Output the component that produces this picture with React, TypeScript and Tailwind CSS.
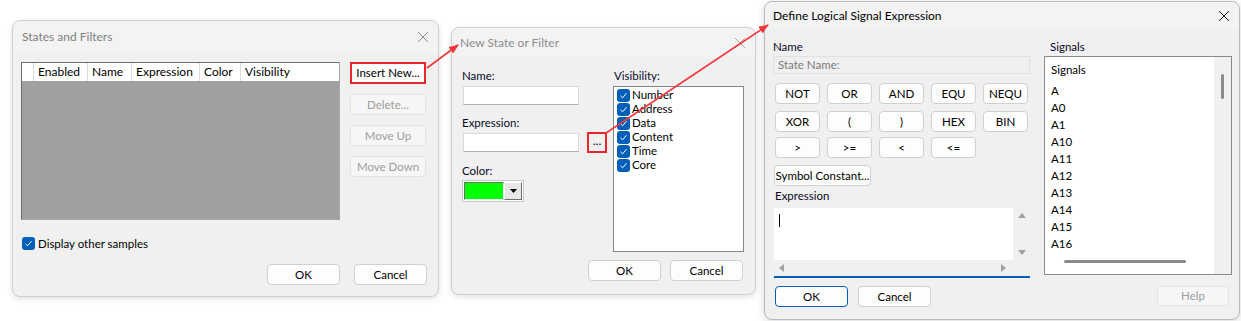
import React from "react";

const font = "font-['Lato',sans-serif]";

const Btn = ({ label, className = "", disabled = false }: { label: string; className?: string; disabled?: boolean }) => (
  <div
    className={`flex items-center justify-center whitespace-nowrap rounded-[4px] border text-[11.5px] ${
      disabled ? "border-[#e3e3e3] bg-[#f6f6f6] text-[#9d9d9d]" : "border-[#d0d0d0] bg-[#fdfdfd] text-black"
    } ${className}`}
  >
    {label}
  </div>
);

const Check = () => (
  <div className="flex h-[13px] w-[13px] shrink-0 items-center justify-center rounded-[3px] bg-[#005fb8]">
    <svg width="9" height="9" viewBox="0 0 9 9">
      <path d="M1.5 4.8 L3.6 6.8 L7.5 2.2" fill="none" stroke="white" strokeWidth="1" />
    </svg>
  </div>
);

const Close = ({ color }: { color: string }) => (
  <svg width="12" height="12" viewBox="0 0 12 12">
    <path d="M1 1 L11 11 M11 1 L1 11" stroke={color} strokeWidth="1" />
  </svg>
);

const StatesAndFilters = () => (
  <div className="ml-[12px] mt-[20px] flex h-[277px] w-[427px] flex-col rounded-[8px] border border-[#cfcfcf] bg-[#f0f0f0] shadow-[0_2px_6px_rgba(0,0,0,0.12)]">
    <div className="flex h-[31px] items-center justify-between rounded-t-[8px] bg-[#f3f3f3] pl-[9px] pr-[9px] pt-[1px]">
      <span className="text-[12px] text-[#808080]">States and Filters</span>
      <Close color="#8a8a8a" />
    </div>
    <div className="flex gap-[10px] pl-[8px] pt-[10px]">
      <div className="flex h-[158px] w-[319px] flex-col border border-[#a8a8a8] border-l-[#6d6d6d] border-t-[#6d6d6d] bg-[#a0a0a0]">
        <div className="flex h-[18px] bg-white text-[12px] text-black">
          <div className="w-[12px] border-r border-[#dcdcdc]" />
          <div className="w-[54px] border-r border-[#dcdcdc] pl-[4px] leading-[18px]">Enabled</div>
          <div className="w-[44px] border-r border-[#dcdcdc] pl-[4px] leading-[18px]">Name</div>
          <div className="w-[68px] border-r border-[#dcdcdc] pl-[4px] leading-[18px]">Expression</div>
          <div className="w-[41px] border-r border-[#dcdcdc] pl-[4px] leading-[18px]">Color</div>
          <div className="flex-1 pl-[4px] leading-[18px]">Visibility</div>
        </div>
      </div>
      <div className="flex w-[76px] flex-col gap-[10px]">
        <div className="h-[22px] border-2 border-[#e8262c] bg-[#fdfdfd]">
          <div className="flex h-full items-center justify-center text-[11.5px] text-black">Insert New...</div>
        </div>
        <Btn label="Delete..." disabled className="h-[21px]" />
        <Btn label="Move Up" disabled className="h-[21px]" />
        <Btn label="Move Down" disabled className="h-[21px]" />
      </div>
    </div>
    <div className="mt-[15px] flex items-center gap-[3px] pl-[9px] text-[11.5px] text-black">
      <Check />
      <span>Display other samples</span>
    </div>
    <div className="mt-[12px] flex justify-end gap-[14px] pr-[11px]">
      <Btn label="OK" className="h-[21px] w-[73px]" />
      <Btn label="Cancel" className="h-[21px] w-[73px]" />
    </div>
  </div>
);

const NewState = () => (
  <div className="ml-[12px] mt-[27px] flex h-[268px] w-[305px] flex-col rounded-[8px] border border-[#cfcfcf] bg-[#f0f0f0] shadow-[0_2px_6px_rgba(0,0,0,0.12)]">
    <div className="flex h-[29px] items-center justify-between rounded-t-[8px] bg-[#f3f3f3] pl-[8px] pr-[9px]">
      <span className="text-[12px] text-[#8c8c8c]">New State or Filter</span>
      <Close color="#a8a8a8" />
    </div>
    <div className="flex pl-[10px] pt-[11px]">
      <div className="flex w-[151px] flex-col text-[11.5px] text-[#0a0a28]">
        <span className="h-[16px] leading-[16px]">Name:</span>
        <div className="ml-[1px] mt-[2px] h-[19px] w-[116px] border border-[#dadada] border-b-[#b0b0b0] bg-white" />
        <span className="mt-[10px] h-[16px] leading-[16px]">Expression:</span>
        <div className="mt-[1px] flex items-center">
          <div className="ml-[1px] h-[19px] w-[116px] border border-[#dadada] border-b-[#b0b0b0] bg-white" />
          <div className="ml-[8px] flex h-[21px] w-[20px] items-center justify-center border-2 border-[#e8262c] pb-[3px] text-[12px] text-black">
            ...
          </div>
        </div>
        <span className="mt-[10px] h-[16px] leading-[16px]">Color:</span>
        <div className="mt-[1px] flex h-[22px] w-[62px] items-center border border-[#c8c8c8] bg-white p-[1px]">
          <div className="h-full w-[40px] border border-[#6d6d6d] border-b-[#f0f0f0] border-r-[#f0f0f0] bg-[#00ff00]" />
          <div className="flex h-full w-[18px] items-center justify-center border border-[#6d6d6d] border-l-[#ffffff] border-t-[#ffffff] bg-[#e8e8e8]">
            <svg width="7" height="4" viewBox="0 0 7 4">
              <path d="M0 0 L7 0 L3.5 4 Z" fill="black" />
            </svg>
          </div>
        </div>
      </div>
      <div className="flex flex-col text-[11.5px] text-[#0a0a28]">
        <span className="h-[16px] pl-[1px] leading-[16px]">Visibility:</span>
        <div className="mt-[2px] h-[166px] w-[131px] border border-[#828790] bg-white pl-[3px] pt-[1px]">
          {["Number", "Address", "Data", "Content", "Time", "Core"].map((v) => (
            <div key={v} className="flex h-[14px] items-center gap-[2px] text-black">
              <Check />
              <span>{v}</span>
            </div>
          ))}
        </div>
      </div>
    </div>
    <div className="mt-[8px] flex justify-end gap-[9px] pr-[12px]">
      <Btn label="OK" className="h-[21px] w-[73px]" />
      <Btn label="Cancel" className="h-[21px] w-[73px]" />
    </div>
  </div>
);

const Signals = () => {
  const items = ["A", "A0", "A1", "A10", "A11", "A12", "A13", "A14", "A15", "A16"];
  return (
    <div className="mt-[1px] h-[219px] w-[188px] border border-[#8a8a8a] bg-white">
      <div className="flex h-full">
        <div className="flex-1 pl-[6px] pt-[5px] text-[11.5px] text-black">
          <div className="h-[20px] leading-[16px]">Signals</div>
          {items.map((s) => (
            <div key={s} className="h-[17px] leading-[17px]">
              {s}
            </div>
          ))}
          <div className="ml-[13px] mt-[8px] h-[3px] w-[122px] rounded-full bg-[#8a8a8a]" />
        </div>
        <div className="flex w-[17px] flex-col items-center bg-[#f0f0f0] pt-[17px]">
          <div className="h-[25px] w-[3px] rounded-full bg-[#8a8a8a]" />
        </div>
      </div>
    </div>
  );
};

const DefineExpression = () => {
  const rows = [
    ["NOT", "OR", "AND", "EQU", "NEQU"],
    ["XOR", "(", ")", "HEX", "BIN"],
    [">", ">=", "<", "<="],
  ];
  return (
    <div className="ml-[8px] mt-[1px] flex h-[319px] w-[476px] flex-col rounded-[8px] border border-[#b9b9b9] bg-[#f0f0f0] shadow-[0_2px_8px_rgba(0,0,0,0.15)]">
      <div className="flex h-[28px] items-center justify-between rounded-t-[8px] bg-[#f3f3f3] pl-[8px] pr-[9px]">
        <span className="text-[12px] text-black">Define Logical Signal Expression</span>
        <Close color="#1a1a1a" />
      </div>
      <div className="flex gap-[14px] pl-[8px] pt-[9px]">
        <div className="flex w-[257px] flex-col text-[11.5px] text-[#0a0a28]">
          <span className="h-[16px] leading-[16px]">Name</span>
          <div className="mt-[1px] flex h-[18px] items-center border border-[#e1e1e1] bg-[#f0f0f0] pl-[4px] text-[#7a7a7a]">
            State Name:
          </div>
          <div className="mt-[9px] flex flex-col gap-[7px] pl-[2px]">
            {rows.map((r, i) => (
              <div key={i} className={`flex gap-[7px] ${i === 2 ? "-mt-[2px]" : ""}`}>
                {r.map((b) => (
                  <Btn key={b} label={b} className="h-[21px] w-[45px]" />
                ))}
              </div>
            ))}
          </div>
          <Btn label="Symbol Constant..." className="ml-[1px] mt-[7px] h-[21px] w-[97px]" />
          <span className="mt-[2px] h-[16px] pl-[2px] leading-[16px]">Expression</span>
          <div className="ml-[1px] mt-[4px] flex h-[70px] w-[256px] flex-col border-b-2 border-[#005fb8] bg-[#f0f0f0]">
            <div className="flex h-[52px]">
              <div className="flex-1 bg-white pl-[5px] pt-[6px]">
                <div className="h-[13px] w-[1px] bg-black" />
              </div>
              <div className="flex w-[17px] flex-col items-center justify-between bg-[#f0f0f0] py-[5px]">
                <svg width="8" height="5" viewBox="0 0 8 5"><path d="M0 5 L4 0 L8 5 Z" fill="#a0a0a0" /></svg>
                <svg width="8" height="5" viewBox="0 0 8 5"><path d="M0 0 L4 5 L8 0 Z" fill="#a0a0a0" /></svg>
              </div>
            </div>
            <div className="flex h-[16px] items-center justify-between pl-[5px] pr-[24px]">
              <svg width="5" height="8" viewBox="0 0 5 8"><path d="M5 0 L0 4 L5 8 Z" fill="#a0a0a0" /></svg>
              <svg width="5" height="8" viewBox="0 0 5 8"><path d="M0 0 L5 4 L0 8 Z" fill="#a0a0a0" /></svg>
            </div>
          </div>
          <div className="mt-[8px] flex gap-[10px] pl-[2px]">
            <div className="flex h-[21px] w-[73px] items-center justify-center rounded-[4px] border border-[#005fb8] bg-[#fdfdfd] text-black">
              OK
            </div>
            <Btn label="Cancel" className="h-[21px] w-[73px]" />
          </div>
        </div>
        <div className="flex flex-col text-[11.5px] text-[#0a0a28]">
          <span className="h-[16px] pl-[6px] leading-[16px]">Signals</span>
          <Signals />
          <Btn label="Help" disabled className="ml-[113px] mt-[11px] h-[20px] w-[72px]" />
        </div>
      </div>
    </div>
  );
};

export default function App() {
  return (
    <div className={`relative flex h-[321px] w-[1241px] items-start bg-white ${font}`}>
      <StatesAndFilters />
      <NewState />
      <DefineExpression />
      <svg className="pointer-events-none absolute left-0 top-0" width="1241" height="321">
        <defs>
          <marker id="ah" markerWidth="10" markerHeight="8" refX="9" refY="4" orient="auto" markerUnits="userSpaceOnUse">
            <path d="M0 0 L10 4 L0 8 Z" fill="#f0383c" />
          </marker>
        </defs>
        <line x1="427" y1="68" x2="458" y2="45" stroke="#f0383c" strokeWidth="1.6" markerEnd="url(#ah)" />
        <line x1="606" y1="133" x2="768" y2="25" stroke="#f0383c" strokeWidth="1.6" markerEnd="url(#ah)" />
      </svg>
    </div>
  );
}
